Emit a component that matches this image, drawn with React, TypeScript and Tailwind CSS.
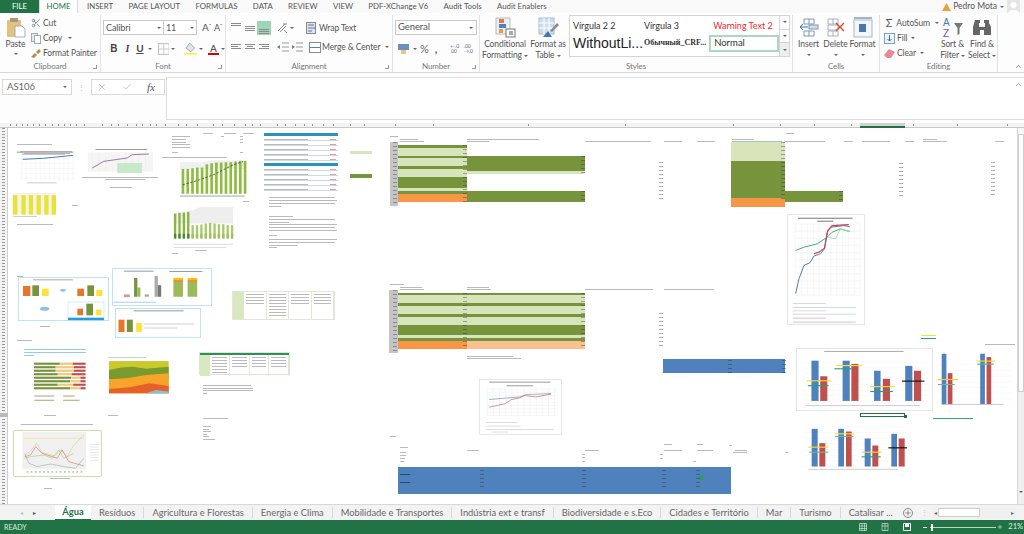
import { ChevronDown, Plus, Scissors, X, Check } from "lucide-react"

const tabs = ["INSERT", "PAGE LAYOUT", "FORMULAS", "DATA", "REVIEW", "VIEW", "PDF-XChange V6", "Audit Tools", "Audit Enablers"]
const sheets = ["Resíduos", "Agricultura e Florestas", "Energia e Clima", "Mobilidade e Transportes", "Indústria ext e transf", "Biodiversidade e s.Eco", "Cidades e Território", "Mar", "Turismo", "Catalisar ..."]

// tiny illegible cell text in the zoomed out sheet: [x, y, width]
const marks: number[][] = [
  [17, 144, 35], [20, 151, 52], [24, 153, 46], [82, 177, 76], [105, 179, 40], [110, 187, 22], [72, 205, 6], [17, 224, 36],
  [203, 133, 10], [224, 133, 12], [243, 133, 11], [172, 136, 18], [172, 139, 14], [172, 142, 14], [172, 144, 18], [172, 147, 18], [172, 152, 6], [221, 136, 3], [240, 136, 3], [240, 139, 3], [240, 142, 3], [240, 152, 3],
  [162, 157, 65], [172, 253, 6], [243, 201, 6], [195, 250, 12],
  [269, 197, 66], [269, 200, 68], [269, 203, 66], [269, 206, 12], [269, 216, 24], [269, 219, 66], [269, 222, 20], [269, 224, 68], [269, 227, 66], [269, 230, 68], [269, 235, 8], [269, 239, 68], [269, 242, 66], [269, 245, 28], [269, 247, 8],
  [17, 340, 15], [40, 326, 10], [17, 276, 6],
  [44, 415, 12], [108, 415, 10], [203, 385, 48], [203, 388, 50], [203, 390, 50], [203, 393, 4], [203, 418, 25], [203, 426, 8], [203, 429, 6], [203, 431, 8], [203, 434, 4], [203, 436, 6], [203, 439, 12],
  [21, 424, 72], [44, 488, 8], [50, 478, 20],
  [390, 136, 8], [400, 139, 18], [400, 141, 24], [467, 139, 72], [467, 141, 22], [585, 141, 66], [664, 141, 18], [697, 141, 18], [732, 139, 22], [732, 141, 50], [785, 141, 40], [844, 141, 9], [862, 141, 28], [905, 141, 9], [923, 139, 14], [923, 141, 24], [995, 141, 9], [786, 133, 8],
  [390, 284, 14], [400, 287, 22], [400, 289, 24], [467, 287, 22], [467, 289, 24], [585, 289, 68], [664, 289, 50],
  [467, 356, 46], [467, 358, 54], [390, 436, 6], [400, 447, 8], [400, 452, 6], [400, 455, 6], [400, 458, 5], [400, 461, 4], [467, 450, 12], [585, 450, 14], [664, 450, 18], [697, 450, 16], [664, 444, 8], [697, 444, 6], [582, 454, 3], [582, 457, 3], [582, 461, 3], [660, 454, 3], [660, 458, 3], [693, 461, 3],
  [735, 450, 12], [733, 452, 14], [729, 445, 3], [785, 452, 3], [985, 344, 30],
]

// columns of little numbers beside the coloured cells: [x, y, height]
const numberStrips: number[][] = [
  [393, 142, 64], [463, 145, 57], [581, 156, 18], [581, 191, 11], [781, 142, 60], [839, 191, 11], [659, 162, 38], [899, 163, 36], [991, 162, 34],
  [393, 290, 62], [463, 293, 56], [581, 293, 56], [659, 313, 33], [728, 360, 13], [782, 360, 13], [480, 470, 20], [582, 470, 20], [662, 470, 20], [696, 470, 20],
]

const ticks = [10, 16, 22, 27, 33, 39, 45, 52, 58, 64, 70, 76, 84, 102, 111, 118, 127, 136, 142, 150, 156, 165, 178, 186, 197, 213, 222, 234, 245, 252, 260, 277, 285, 295, 304, 312, 323, 333, 350, 364, 395, 433, 528, 625, 733, 780, 814, 851, 873, 913, 957, 1007]

function Group({ w, label, launcher, children }: { w: string; label: string; launcher?: boolean; children: React.ReactNode }) {
  return (
    <div className={`${w} relative flex shrink-0 flex-col whitespace-nowrap border-r border-[#e2e2e2]`}>
      <div className="min-h-0 flex-1">{children}</div>
      <div className="h-[11px] text-center text-[8px] leading-[10px] text-[#777]">{label}</div>
      {launcher && <div className="absolute bottom-[3px] right-[3px] size-[4px] border-b border-r border-[#999]" />}
    </div>
  )
}

function Caret({ className = "" }: { className?: string }) {
  return <span className={`inline-block border-x-[2px] border-t-[2px] border-x-transparent border-t-[#666] align-middle ${className}`} />
}

function AlignIcon({ lines, active }: { lines: number[][]; active?: boolean }) {
  return (
    <svg width="14" height="14" viewBox="0 0 14 14" className={active ? "bg-[#9fd5b7]" : ""}>
      {lines.map((l, i) => (
        <rect key={i} x={l[0]} y={l[1]} width={l[2]} height="1" fill="#8a8a8a" />
      ))}
    </svg>
  )
}

function Ribbon() {
  return (
    <div className="flex h-[60px] border-b border-[#d8d8d8] bg-[#fdfdfd] pt-[2px] text-[8.5px] tracking-[-0.1px] text-[#555]">
      <Group w="w-[101px]" label="Clipboard" launcher>
        <div className="flex pt-[2px]">
          <div className="flex w-[31px] flex-col items-center">
            <svg width="20" height="21" viewBox="0 0 20 21">
              <rect x="1" y="3" width="14" height="17" rx="1" fill="#e3c27f" />
              <rect x="4" y="1" width="8" height="4" fill="#a99a7a" />
              <path d="M9 9h7l3 3v8H9z" fill="#fff" stroke="#8fa0b5" strokeWidth="0.8" />
            </svg>
            <span className="leading-[12px]">Paste</span>
            <Caret className="mt-[3px]" />
          </div>
          <div className="flex flex-col gap-[3px] leading-[12px]">
            <div className="flex items-center gap-[2px]"><Scissors size={10} className="text-[#6b84a8]" /><span>Cut</span></div>
            <div className="flex items-center gap-[2px]">
              <svg width="10" height="11" viewBox="0 0 10 11"><rect x="0.5" y="0.5" width="6" height="8" fill="#e8e8e8" stroke="#aaa" /><rect x="3.5" y="2.5" width="6" height="8" fill="#fff" stroke="#9ab" /></svg>
              <span>Copy</span><Caret className="ml-[4px]" />
            </div>
            <div className="flex items-center gap-[2px]">
              <svg width="10" height="10" viewBox="0 0 10 10"><path d="M0 9l4-4 2 2-3 3zM5 4l3-3 2 2-3 3z" fill="#b58a4a" /></svg>
              <span>Format Painter</span>
            </div>
          </div>
        </div>
      </Group>

      <Group w="w-[125px]" label="Font" launcher>
        <div className="flex items-center pl-[2px] pt-[5px]">
          <div className="flex h-[15px] w-[61px] items-center justify-between border border-[#c9c9c9] bg-white px-[2px] text-[9px]">Calibri<Caret /></div>
          <div className="flex h-[15px] w-[33px] items-center justify-between border border-l-0 border-[#c9c9c9] bg-white px-[2px] text-[9px]">11<Caret /></div>
          <span className="ml-[5px] text-[10px]">A<sup className="text-[6px]">ˆ</sup></span><span className="ml-[3px] text-[9px]">A<sup className="text-[6px]">ˇ</sup></span>
        </div>
        <div className="flex items-center pl-[6px] pt-[6px] text-[10px] text-[#444]">
          <b className="w-[14px] text-center font-['Liberation_Sans']">B</b>
          <i className="w-[14px] text-center font-['Liberation_Serif'] font-bold">I</i>
          <u className="w-[12px] text-center font-bold">U</u>
          <Caret className="ml-[2px]" />
          <svg width="12" height="12" viewBox="0 0 12 12" className="ml-[6px]"><rect x="0.5" y="0.5" width="11" height="11" fill="none" stroke="#bbb" /><path d="M6 0v12M0 6h12" stroke="#ccc" /></svg>
          <Caret className="ml-[2px]" />
          <svg width="13" height="13" viewBox="0 0 13 13" className="ml-[9px]"><path d="M6 1l5 5-4 4-5-4z" fill="#dfe6ee" stroke="#888" strokeWidth="0.7" /><rect x="0" y="11" width="13" height="2" fill="#f6f05a" /></svg>
          <Caret className="ml-[2px]" />
          <span className="ml-[5px] flex flex-col items-center text-[10px] font-semibold leading-[10px] text-[#555]">A<span className="h-[2px] w-[11px] bg-[#e00000]" /></span>
          <Caret className="ml-[2px]" />
        </div>
      </Group>

      <Group w="w-[167px]" label="Alignment" launcher>
        <div className="flex items-center pl-[3px] pt-[6px]">
          <AlignIcon lines={[[2, 2, 10], [2, 4, 10]]} />
          <AlignIcon lines={[[2, 5, 10], [2, 7, 10], [2, 9, 10]]} />
          <AlignIcon active lines={[[2, 8, 10], [2, 10, 10], [2, 12, 10]]} />
          <svg width="13" height="12" viewBox="0 0 13 12" className="ml-[5px]"><path d="M2 9l7-7M4 10l6-6M7 2h4M8 8l3 3" stroke="#888" fill="none" /></svg>
          <Caret className="ml-[1px]" />
          <svg width="12" height="12" viewBox="0 0 12 12" className="ml-[12px]"><rect x="0.5" y="0.5" width="9" height="11" fill="#dde6f0" stroke="#889" /><path d="M2 3h6M2 6h8M2 9h4" stroke="#678" /></svg>
          <span className="ml-[1px]">Wrap Text</span>
        </div>
        <div className="flex items-center pl-[3px] pt-[5px]">
          <AlignIcon lines={[[2, 4, 10], [2, 6, 7], [2, 8, 10]]} />
          <AlignIcon lines={[[2, 4, 10], [4, 6, 6], [2, 8, 10]]} />
          <AlignIcon lines={[[2, 4, 10], [5, 6, 7], [2, 8, 10]]} />
          <svg width="14" height="12" viewBox="0 0 14 12" className="ml-[5px]"><path d="M6 2h7M6 6h7M6 10h7" stroke="#999" /><path d="M1 6l3-2v4z" fill="#5b7fb0" /></svg>
          <svg width="14" height="12" viewBox="0 0 14 12"><path d="M6 2h7M6 6h7M6 10h7" stroke="#999" /><path d="M5 6l-3-2v4z" fill="#5b7fb0" /></svg>
          <svg width="12" height="11" viewBox="0 0 12 11" className="ml-[5px]"><rect x="0.5" y="0.5" width="11" height="10" fill="#fff" stroke="#889" /><path d="M1 5.5h10" stroke="#5b7fb0" /></svg>
          <span className="ml-[1px]">Merge &amp; Center</span><Caret className="ml-[5px]" />
        </div>
      </Group>

      <Group w="w-[87px]" label="Number" launcher>
        <div className="px-[2px] pt-[5px]">
          <div className="flex h-[15px] w-[82px] items-center justify-between border border-[#c9c9c9] bg-white px-[2px] text-[9.5px]">General<Caret className="mr-[1px]" /></div>
        </div>
        <div className="flex items-center pl-[5px] pt-[6px] text-[11px] text-[#666]">
          <svg width="11" height="12" viewBox="0 0 11 12"><rect x="0" y="1" width="11" height="6" fill="#6d8fbb" /><rect x="3" y="7" width="5" height="4" fill="#e4c87e" /></svg>
          <Caret className="ml-[4px]" /><span className="ml-[3px]">%</span><span className="ml-[6px] font-bold">,</span>
          <span className="ml-[13px] text-[5px] leading-[5px] text-[#567]">←.0<br />.00</span>
          <span className="ml-[5px] text-[5px] leading-[5px] text-[#567]">.00<br />→.0</span>
        </div>
      </Group>

      <Group w="w-[313px]" label="Styles">
        <div className="flex pl-[2px]">
          <div className="flex w-[46px] flex-col items-center text-center leading-[11px]">
            <svg width="21" height="21" viewBox="0 0 21 21" className="mb-[1px] mt-[2px]"><rect x="1" y="1" width="14" height="16" fill="#eaf0f7" stroke="#bbb" /><rect x="4" y="2" width="5" height="4" fill="#e07a4a" /><rect x="4" y="7" width="7" height="4" fill="#4f7fc0" /><rect x="4" y="12" width="4" height="4" fill="#e5a03a" /><rect x="11" y="12" width="9" height="8" fill="#fff" stroke="#777" /><path d="M14 15h4M14 17h4" stroke="#555" /></svg>
            <span>Conditional</span><span>Formatting <Caret /></span>
          </div>
          <div className="flex w-[40px] flex-col items-center text-center leading-[11px]">
            <svg width="21" height="21" viewBox="0 0 21 21" className="mb-[1px] mt-[2px]"><rect x="1" y="1" width="15" height="16" fill="#cfdcec" stroke="#a9bdd3" /><path d="M1 6h15M1 11h15M6 1v16M11 1v16" stroke="#fff" /><path d="M5 20l5-6 4 6z" fill="#3f78b5" /><path d="M12 14l7-8 2 2-7 7z" fill="#888" /></svg>
            <span>Format as</span><span>Table <Caret /></span>
          </div>
          <div className="ml-[1px] flex h-[42px] w-[221px] border border-[#d4d4d4] bg-white text-[9px] tracking-normal text-[#333]">
            <div className="w-[70px] pl-[3px]">
              <div className="pt-[4px] leading-[12px]">Vírgula 2 2</div>
              <div className="whitespace-nowrap pt-[2px] font-['Liberation_Sans'] text-[14px] leading-[18px] text-[#222]">WithoutLi...</div>
            </div>
            <div className="w-[70px] pl-[4px]">
              <div className="pt-[4px] leading-[12px]">Vírgula 3</div>
              <div className="whitespace-nowrap pt-[5px] font-['Liberation_Serif'] text-[8px] font-bold leading-[12px]">Обычный_CRF...</div>
            </div>
            <div className="w-[70px]">
              <div className="pl-[4px] pt-[4px] leading-[12px] text-[#f02a2a]">Warning Text 2</div>
              <div className="mt-[3px] flex h-[17px] w-[70px] items-center border-2 border-[#a8d8bf] pl-[3px] text-[9.5px]">Normal</div>
            </div>
            <div className="flex w-[10px] flex-col border-l border-[#d4d4d4]">
              <div className="flex flex-1 items-center justify-center"><Caret /></div>
              <div className="flex flex-1 items-center justify-center border-y border-[#d4d4d4]"><Caret /></div>
              <div className="flex flex-1 items-center justify-center bg-[#eee]"><Caret /></div>
            </div>
          </div>
        </div>
      </Group>

      <Group w="w-[87px]" label="Cells">
        <div className="flex pl-[2px] leading-[11px]">
          <div className="flex w-[27px] flex-col items-center">
            <svg width="20" height="21" viewBox="0 0 20 21" className="mb-[1px] mt-[2px]"><path d="M5 2h10v5H5zM5 14h10v5H5zM10 2v5M10 14v5" fill="#fff" stroke="#7d96b3" /><rect x="10" y="8" width="9" height="4" fill="#d5dfeb" stroke="#7d96b3" /><path d="M9 10H1m3-3l-3 3 3 3" stroke="#3572b0" fill="none" /></svg>
            <span>Insert</span><Caret className="mt-[4px]" />
          </div>
          <div className="flex w-[27px] flex-col items-center">
            <svg width="20" height="21" viewBox="0 0 20 21" className="mb-[1px] mt-[2px]"><path d="M2 2h10v5H2zM2 14h10v5H2zM7 2v5M7 14v5M2 8h10v5H2z" fill="#fff" stroke="#a3b1c2" /><path d="M10 6l8 8m0-8l-8 8" stroke="#d9452c" strokeWidth="1.4" /></svg>
            <span>Delete</span><Caret className="mt-[4px]" />
          </div>
          <div className="flex w-[27px] flex-col items-center">
            <svg width="20" height="21" viewBox="0 0 20 21" className="mb-[1px] mt-[2px]"><rect x="1" y="3" width="18" height="17" fill="#f4f7fa" stroke="#a9b6c4" /><rect x="6" y="7" width="7" height="8" fill="#4878b0" /><path d="M1 1h18" stroke="#3572b0" /></svg>
            <span>Format</span><Caret className="mt-[4px]" />
          </div>
        </div>
      </Group>

      <Group w="w-[118px]" label="Editing">
        <div className="flex pl-[4px] leading-[12px]">
          <div className="flex w-[55px] flex-col gap-[3px] pt-[2px]">
            <div className="flex items-center gap-[2px]"><span className="w-[11px] text-center text-[11px] leading-[12px]">Σ</span>AutoSum<Caret className="ml-[3px]" /></div>
            <div className="flex items-center gap-[2px]"><svg width="11" height="11" viewBox="0 0 11 11"><rect x="0.5" y="0.5" width="10" height="10" fill="#eef4fb" stroke="#7ea0c8" /><path d="M5.5 2v6m-2-2l2 2 2-2" stroke="#2f6fb5" fill="none" /></svg>Fill<Caret className="ml-[2px]" /></div>
            <div className="flex items-center gap-[2px]"><svg width="11" height="9" viewBox="0 0 11 9"><path d="M0 6l5-6 6 3-4 6H3z" fill="#e58a96" /></svg>Clear<Caret className="ml-[2px]" /></div>
          </div>
          <div className="flex w-[27px] flex-col items-center leading-[11px]">
            <svg width="20" height="21" viewBox="0 0 20 21" className="mb-[1px] mt-[2px]"><path d="M11 6h9l-3.5 5v6l-2 1v-7z" fill="#777" /><text x="0" y="9" fontSize="10" fill="#3d78c0" fontFamily="Liberation Sans">A</text><text x="0" y="20" fontSize="10" fill="#7a52a8" fontFamily="Liberation Sans">Z</text></svg>
            <span>Sort &amp;</span><span>Filter <Caret /></span>
          </div>
          <div className="ml-[1px] flex w-[30px] flex-col items-center leading-[11px]">
            <svg width="20" height="21" viewBox="0 0 20 21" className="mb-[1px] mt-[2px]"><path d="M3 3h5v3h-1v4h1v8H1v-8zM12 3h5v3l2 4v8h-7v-8h1V6h-1zM8 10h4v3H8z" fill="#666" /></svg>
            <span>Find &amp;</span><span>Select <Caret /></span>
          </div>
        </div>
      </Group>
      <div className="relative flex-1"><ChevronDown size={9} className="absolute bottom-[1px] right-[1px] rotate-180 text-[#666]" /></div>
    </div>
  )
}

function FormulaBar() {
  return (
    <div className="flex h-[50px] bg-[#fdfdfd] pb-[3px] pt-[4px] text-[9.5px] text-[#666]">
      <div className="ml-[2px] mt-[2px] flex h-[16px] w-[70px] items-center justify-between border border-[#d8d8d8] bg-white px-[4px]">AS106<Caret /></div>
      <div className="mt-[2px] flex h-[16px] w-[19px] items-center justify-center text-[7px] text-[#bbb]">⋮</div>
      <div className="mt-[2px] flex h-[16px] w-[74px] items-center border border-[#d8d8d8] bg-white">
        <X size={10} className="ml-[5px] text-[#bbb]" />
        <Check size={10} className="ml-[15px] text-[#bbb]" />
        <span className="ml-[15px] font-['Liberation_Serif'] text-[11px] italic text-[#555]">fx</span>
      </div>
      <div className="relative ml-px flex-1 border border-r-0 border-[#dcdcdc] bg-white">
        <ChevronDown size={9} className="absolute right-[1px] top-[2px] rotate-180 text-[#777]" />
      </div>
    </div>
  )
}

function Ruler() {
  return (
    <div className="relative h-[5px] shrink-0 border-b border-[#c9c9c9] bg-[#f3f3f3]">
      {ticks.map((x) => (
        <div key={x} className="absolute top-px h-[2px] w-px bg-[#8e8e8e]" style={{ left: x }} />
      ))}
      <div className="absolute left-[860px] top-0 h-[5px] w-[45px] border-b-2 border-[#217346] bg-[#d2d2d2]" />
    </div>
  )
}

function Cols({ rows }: { rows: [number, string][] }) {
  return (
    <div className="flex flex-col">
      {rows.map(([h, c], i) => (
        <div key={i} className={c} style={{ height: h }} />
      ))}
    </div>
  )
}

const dark = "bg-[#77933c]"
const light = "bg-[#d8e4bc]"
const orange = "bg-[#f79646]"

function Bars({ view, w, h, bars, lines, base, title }: { view: string; w: number; h: number; bars: number[][]; lines: (number | string)[][]; base: number; title?: boolean }) {
  const [vx, vy, vw, vh] = view.split(" ").map(Number)
  return (
    <svg width={w} height={h} viewBox={view}>
      {[...Array(8)].map((_, i) => (
        <line key={i} x1={vx + 15} x2={vx + vw - 10} y1={base - i * 17} y2={base - i * 17} stroke="#ececec" />
      ))}
      {title && <rect x={vx + 80} y={vy + 6} width={245} height="3" fill="#aaa" />}
      {bars.map((b, i) => (
        <rect key={i} x={b[0]} y={b[2]} width={b[1] - b[0]} height={base - b[2]} fill={i % 2 ? "#c0504d" : "#4f81bd"} />
      ))}
      {lines.map((l, i) => (
        <line key={i} x1={l[0]} x2={l[1]} y1={l[2]} y2={l[2]} stroke={l[3] as string} strokeWidth="3.5" />
      ))}
      <rect x={vx + 25} y={vy + vh - 15} width={vw - 60} height="3" fill="#ccc" />
    </svg>
  )
}

function MiniChart({ view, w, h, children, className }: { view: string; w: number; h: number; children: React.ReactNode; className: string }) {
  return (
    <svg width={w} height={h} viewBox={view} className={`absolute ${className}`}>
      {children}
    </svg>
  )
}

function Sheet() {
  return (
    <div className="relative flex-1 overflow-hidden bg-white">
      {/* row headers */}
      <div className="absolute inset-y-0 left-0 w-[8px] border-r border-[#d0d0d0] bg-[#f3f3f3] px-[2px]">
        <div className="h-full bg-[repeating-linear-gradient(to_bottom,#999_0,#999_1px,#f3f3f3_1px,#f3f3f3_3px)]" />
      </div>
      <div className="absolute left-0 top-[285px] h-[4px] w-[8px] bg-[#b9b9b9]" />
      {/* everything below keeps page coordinates minus the sheet top (128) */}
      <div className="absolute left-0 top-[-128px] h-[534px] w-[1024px]">
        {marks.map(([x, y, w], i) => (
          <div key={i} className="absolute h-px bg-[#666] opacity-45" style={{ left: x, top: y, width: w }} />
        ))}

        {/* first table */}
        <div className="absolute left-[390px] top-[142px] h-[64px] w-[8px] bg-[#c4c4c4]" />
        <div className="absolute left-[398px] top-[145px] w-[69px]">
          <Cols rows={[[3, dark], [8, light], [2, dark], [8, light], [3, dark], [8, light], [11, dark], [3, light], [3, dark], [8, orange]]} />
        </div>
        <div className="absolute left-[467px] top-[156px] w-[118px]">
          <Cols rows={[[15, dark], [3, light], [17, "bg-white"], [11, dark]]} />
        </div>
        <div className="absolute left-[731px] top-[142px] w-[54px]">
          <Cols rows={[[19, light], [37, dark], [9, orange]]} />
        </div>
        <div className="absolute left-[785px] top-[191px] h-[11px] w-[58px] bg-[#77933c]" />

        {/* second table */}
        <div className="absolute left-[389px] top-[290px] h-[63px] w-[9px] bg-[#c4c4c4]" />
        <div className="absolute left-[398px] top-[293px] w-[69px]">
          <Cols rows={[[2, dark], [8, light], [3, dark], [8, light], [3, dark], [8, light], [10, dark], [3, light], [3, dark], [8, orange]]} />
        </div>
        <div className="absolute left-[467px] top-[293px] w-[118px]">
          <Cols rows={[[2, dark], [8, light], [3, dark], [8, light], [3, dark], [8, light], [10, dark], [3, light], [3, dark], [8, "bg-[#fac090]"]]} />
        </div>

        <div className="absolute left-[663px] top-[359px] h-[14px] w-[122px] bg-[#4f81bd]" />
        <div className="absolute left-[398px] top-[467px] h-[27px] w-[333px] bg-[#4f81bd]" />
        <div className="absolute left-[699px] top-[476px] size-[4px] rotate-45 bg-[#2e9e4f]" />
        <div className="absolute left-[400px] top-[474px] h-px w-[10px] bg-[#2a4a70]" />
        <div className="absolute left-[400px] top-[482px] h-px w-[10px] bg-[#2a4a70]" />

        {numberStrips.map(([x, y, h], i) => (
          <div key={i} className="absolute w-[4px] bg-[repeating-linear-gradient(to_bottom,#333_0,#333_1px,transparent_1px,transparent_4px)] opacity-40" style={{ left: x, top: y, height: h }} />
        ))}

        {/* legend chips */}
        <div className="absolute left-[350px] top-[151px] h-[3px] w-[22px] bg-[#d8e4bc]" />
        <div className="absolute left-[350px] top-[174px] h-[4px] w-[22px] bg-[#77933c]" />

        {/* water chart left */}
        <MiniChart view="45 75 180 105" w={60} h={35} className="left-[15px] top-[150px]">
          <rect x="50" y="80" width="170" height="3" fill="#999" />
          <rect x="65" y="86" width="130" height="3" fill="#aaa" />
          {[...Array(12)].map((_, i) => <line key={i} x1={65 + i * 14} x2={65 + i * 14} y1="95" y2="165" stroke="#e6e6e6" />)}
          {[0, 1, 2, 3, 4].map((i) => <line key={i} x1="60" x2="222" y1={100 + i * 15} y2={100 + i * 15} stroke="#e6e6e6" />)}
          <path d="M68 103L130 100L220 91" stroke="#4d7fb5" fill="none" strokeWidth="3" />
          <rect x="80" y="172" width="90" height="3" fill="#ccc" />
        </MiniChart>
        <MiniChart view="260 70 200 90" w={67} h={30} className="left-[87px] top-[148px]">
          <rect x="285" y="73" width="155" height="3" fill="#999" />
          <rect x="262" y="83" width="195" height="58" fill="#f5f5f5" />
          {[...Array(9)].map((_, i) => <line key={i} x1={275 + i * 20} x2={275 + i * 20} y1="83" y2="141" stroke="#e6e6e6" />)}
          <path d="M275 130L310 110L380 100L395 90L445 88" stroke="#a07aa0" fill="none" strokeWidth="3" />
          <rect x="350" y="115" width="75" height="30" fill="#c9e8c9" />
        </MiniChart>
        <MiniChart view="30 185 140 85" w={47} h={30} className="left-[10px] top-[188px]">
          <rect x="35" y="197" width="132" height="65" fill="#f4f4ec" />
          {[45, 70, 92, 115, 138, 160].map((x) => <rect key={x} x={x - 6} y="204" width="13" height="58" fill="#e8e337" />)}
          <rect x="40" y="266" width="70" height="3" fill="#ccc" />
        </MiniChart>

        {/* tall green bar charts */}
        <MiniChart view="525 100 220 125" w={73} h={42} className="left-[175px] top-[158px]">
          <path d="M540 112L600 112L640 106H740V132H540z" fill="#f0f0f0" />
          {[132, 132, 130, 128, 128, 118, 115, 113, 113, 112, 112, 110, 108, 108].map((t, i) => (
            <rect key={i} x={545 + i * 14.4} y={t} width="8" height={207 - t} fill="#8fbb3f" />
          ))}
          <path d="M548 180L590 168L640 150L700 120L730 110" stroke="#444" strokeWidth="2.5" fill="none" strokeDasharray="7 5" />
          <rect x="540" y="212" width="195" height="4" fill="#bbb" />
        </MiniChart>
        <MiniChart view="495 240 220 140" w={73} h={47} className="left-[165px] top-[205px]">
          <path d="M520 265L580 255L600 245H700V295H520z" fill="#eee" />
          {[265, 263, 262, 260, 300, 300, 298, 295, 293, 295, 297, 297, 300, 300].map((t, i) => (
            <g key={i}>
              <rect x={522 + i * 13.2} y={t} width="7" height={340 - t} fill={i < 4 ? "#8cb53f" : "#a9c96a"} />
              <rect x={522 + i * 13.2} y="326" width="7" height="14" fill={i < 4 ? "#3f8a33" : "#a0c060"} />
            </g>
          ))}
          <rect x="520" y="356" width="180" height="3" fill="#ddd" />
          <rect x="520" y="366" width="160" height="3" fill="#ddd" />
        </MiniChart>

        {/* report tables */}
        {[133, 163].map((t) => (
          <div key={t} className="absolute left-[264px] w-[74px]" style={{ top: t }}>
            <div className="h-[3px] bg-[#2a93b8]" />
            {[0, 1, 2, 3, 4].map((r) => (
              <div key={r} className="mt-[2px] flex h-[3px] justify-between border-b border-[#cfd9e2] pr-[2px]">
                <div className="mt-[1px] h-px w-[44px] bg-[#bbb]" />
                <div className="mt-[1px] h-px w-[6px] bg-[#d8a0a0]" />
              </div>
            ))}
          </div>
        ))}

        {/* light blue framed boxes */}
        <div className="absolute left-[18px] top-[277px] h-[44px] w-[91px] border border-[#bfe3f3] bg-white" />
        <MiniChart view="55 458 270 129" w={90} h={43} className="left-[18px] top-[278px]">
          <rect x="100" y="462" width="120" height="3" fill="#aaa" />
          <rect x="70" y="482" width="22" height="30" fill="#e8752a" /><rect x="98" y="480" width="20" height="32" fill="#77933c" /><rect x="127" y="490" width="20" height="22" fill="#ffe13a" />
          <ellipse cx="190" cy="495" rx="9" ry="4" fill="#8fbfe5" /><ellipse cx="135" cy="550" rx="14" ry="6" fill="#8fbfe5" />
          <rect x="233" y="490" width="20" height="22" fill="#e8752a" /><rect x="263" y="480" width="20" height="32" fill="#77933c" /><rect x="290" y="494" width="18" height="18" fill="#ffe13a" />
          <rect x="205" y="530" width="108" height="57" fill="#fff" stroke="#bfe3f3" strokeWidth="2" />
          <rect x="233" y="550" width="17" height="20" fill="#e8752a" /><rect x="260" y="535" width="20" height="35" fill="#77933c" /><rect x="288" y="553" width="17" height="17" fill="#ffe13a" />
          <rect x="205" y="577" width="108" height="8" fill="#1e9fe0" />
        </MiniChart>
        <div className="absolute left-[112px] top-[268px] h-[38px] w-[100px] border border-[#bfe3f3] bg-white" />
        <MiniChart view="337 428 298 112" w={99} h={37} className="left-[112px] top-[268px]">
          <rect x="372" y="436" width="90" height="3" fill="#999" /><rect x="510" y="437" width="100" height="3" fill="#999" />
          <rect x="372" y="508" width="18" height="8" fill="#d9958a" /><rect x="403" y="458" width="10" height="57" fill="#77933c" /><rect x="413" y="487" width="9" height="28" fill="#9bbb59" />
          <rect x="435" y="508" width="13" height="7" fill="#aaa" /><rect x="465" y="452" width="10" height="63" fill="#aaa" /><rect x="475" y="480" width="10" height="35" fill="#777" />
          {[522, 565].map((x) => (
            <g key={x}><rect x={x} y="458" width="29" height="7" fill="#ffc000" /><rect x={x} y="465" width="29" height="5" fill="#e8752a" /><rect x={x} y="470" width="29" height="45" fill="#9bbb59" /></g>
          ))}
          <rect x="340" y="530" width="130" height="3" fill="#a8d0e0" />
        </MiniChart>
        <div className="absolute left-[115px] top-[308px] h-[30px] w-[86px] border border-[#bfe3f3] bg-white" />
        <MiniChart view="345 -5 257 90" w={86} h={30} className="left-[115px] top-[308px]">
          <rect x="400" y="2" width="150" height="3" fill="#999" />
          <rect x="355" y="30" width="18" height="37" fill="#e8752a" /><rect x="380" y="30" width="18" height="37" fill="#77933c" /><rect x="408" y="40" width="17" height="27" fill="#ffe13a" />
          <rect x="432" y="42" width="150" height="2" fill="#bbb" /><rect x="432" y="54" width="100" height="2" fill="#bbb" />
        </MiniChart>

        {/* strategy tables */}
        <div className="absolute left-[232px] top-[291px] flex h-[29px] w-[103px] border border-[#e5e5d5] bg-white">
          <div className="w-[11px] bg-[#d8e8c0]" />
          {[20, 30, 20, 20].map((w, i) => (
            <div key={i} className="flex flex-1 flex-col gap-[2px] border-r border-[#e5e5d5] p-[2px]">
              {[...Array(i === 1 ? 8 : 4)].map((_, k) => <div key={k} className="h-px bg-[#bbb]" />)}
            </div>
          ))}
        </div>
        <div className="absolute left-[199px] top-[352px] h-[23px] w-[91px] border border-[#d8e8d0] bg-white">
          <div className="h-[2px] bg-[#2f8f5a]" />
          <div className="flex h-[21px]">
            <div className="w-[10px] bg-[#d8e8c0]" />
            {[0, 1, 2, 3].map((i) => (
              <div key={i} className="flex flex-1 flex-col gap-[2px] border-r border-[#e5e5d5] p-[2px]">
                {[...Array(i === 0 ? 6 : 4)].map((_, k) => <div key={k} className="h-px bg-[#bbb]" />)}
              </div>
            ))}
          </div>
        </div>

        {/* stacked bars and area */}
        <div className="absolute left-[24px] top-[349px] flex w-[62px] flex-col gap-[2px]">
          <div className="h-px bg-[#8fd0e8]" /><div className="h-px bg-[#8fd0e8]" /><div className="h-px w-[10px] bg-[#8fd0e8]" />
        </div>
        <MiniChart view="75 150 190 130" w={63} h={43} className="left-[25px] top-[360px]">
          {[[50, 25, 25], [42, 35, 23], [42, 35, 23], [46, 27, 27], [72, 18, 10], [70, 20, 10], [46, 30, 24], [70, 20, 10]].map(([a, b, c], i) => (
            <g key={i} transform={`translate(102 ${158 + i * 10.6})`}>
              <rect width={a * 1.56} height="6.5" fill="#77933c" />
              <rect x={a * 1.56} width={b * 1.56} height="6.5" fill="#f2c87a" />
              <rect x={(a + b) * 1.56} width={c * 1.56} height="6.5" fill="#c0504d" />
            </g>
          ))}
          <rect x="103" y="257" width="60" height="4" fill="#c5b59a" /><rect x="190" y="257" width="35" height="4" fill="#e0b080" />
          <rect x="103" y="270" width="60" height="4" fill="#c5b59a" /><rect x="190" y="270" width="50" height="4" fill="#b8c090" />
        </MiniChart>
        <div className="absolute left-[108px] top-[357px] h-px w-[38px] bg-[#c6d6c0]" />
        <MiniChart view="325 150 190 105" w={63} h={35} className="left-[108px] top-[360px]">
          <rect x="328" y="153" width="180" height="97" fill="#c9c92b" />
          <path d="M328 180L365 172L400 170L440 176L508 170V208H328z" fill="#7a9a30" />
          <path d="M328 208L380 205L440 195L508 190V250H328z" fill="#f7a52a" />
          <path d="M328 237L390 232L450 220L508 228V250H328z" fill="#e5602a" />
          <path d="M440 250L470 240L508 245V250z" fill="#7ec3e0" />
        </MiniChart>

        {/* quality line chart */}
        <div className="absolute left-[13px] top-[430px] h-[47px] w-[89px] rounded-[2px] border border-[#cfdcae] bg-white" />
        <MiniChart view="40 360 265 138" w={88} h={46} className="left-[14px] top-[430px]">
          <rect x="65" y="365" width="192" height="113" fill="#f0f0f0" />
          <path d="M70 385H250" stroke="#f4e9a8" strokeWidth="3" />
          <path d="M72 430L85 460L110 470L150 462L190 470L225 475L250 445" stroke="#8497b0" fill="none" strokeWidth="1.5" />
          <path d="M72 435L88 425L108 400L125 428L165 438L182 418L200 440L220 405L250 375" stroke="#d8c074" fill="none" strokeWidth="1.5" />
          <path d="M72 440L90 435L105 410L125 430L170 445L185 420L205 455L250 468" stroke="#d0584a" fill="none" strokeWidth="1.5" />
          <path d="M72 445L90 440L130 435L155 445L175 420L190 445L220 430" stroke="#9bbb59" fill="none" strokeWidth="1.5" />
          {[0, 1, 2, 3, 4, 5, 6].map((i) => <rect key={i} x="268" y={402 + i * 8} width="28" height="2" fill="#ddd" />)}
          {[...Array(14)].map((_, i) => <rect key={i} x={78 + i * 12.5} y="484" width="5" height="4" fill="#a8c070" />)}
        </MiniChart>

        {/* evolution chart in the middle */}
        <div className="absolute left-[479px] top-[379px] h-[56px] w-[83px] border border-[#e6e6e6] bg-white" />
        <MiniChart view="298 208 249 166" w={83} h={55} className="left-[479px] top-[379px]">
          <rect x="328" y="216" width="185" height="3" fill="#999" /><rect x="380" y="227" width="80" height="3" fill="#999" />
          {[...Array(12)].map((_, i) => <line key={i} x1={322 + i * 18.5} x2={322 + i * 18.5} y1="238" y2="320" stroke="#e4e4e4" />)}
          {[...Array(9)].map((_, i) => <line key={i} x1="322" x2="530" y1={238 + i * 10} y2={238 + i * 10} stroke="#e4e4e4" />)}
          <path d="M328 270L420 262L440 255L515 252" stroke="#6f90b8" fill="none" strokeWidth="2" />
          <path d="M328 293L375 283L395 270L420 265L435 258L470 262L515 253" stroke="#c0605c" fill="none" strokeWidth="2" />
          <rect x="318" y="338" width="95" height="2" fill="#ccc" /><rect x="318" y="349" width="105" height="2" fill="#ccc" /><rect x="318" y="360" width="205" height="2" fill="#ccc" /><rect x="335" y="367" width="50" height="2" fill="#ccc" />
        </MiniChart>

        {/* supply performance chart */}
        <div className="absolute left-[787px] top-[214px] h-[111px] w-[78px] border border-[#e6e6e6] bg-white" />
        <MiniChart view="202 268 232 332" w={77} h={110} className="left-[788px] top-[215px]">
          <rect x="232" y="276" width="165" height="4" fill="#999" /><rect x="290" y="285" width="48" height="4" fill="#999" />
          {[...Array(12)].map((_, i) => <line key={i} x1={225 + i * 17.7} x2={225 + i * 17.7} y1="295" y2="510" stroke="#e2e2e2" />)}
          {[...Array(11)].map((_, i) => <line key={i} x1="225" x2="420" y1={295 + i * 21.5} y2={295 + i * 21.5} stroke="#e2e2e2" />)}
          <path d="M225 375L250 365L290 355L320 335L335 320L360 310L388 318" stroke="#3fae7a" fill="none" strokeWidth="3" />
          <path d="M320 335L345 340L360 310L390 318" stroke="#9ed8a8" fill="none" strokeWidth="2.5" />
          <path d="M225 505L235 460L250 420L268 412L280 392L300 385L312 370L320 320L330 305L370 300L388 303" stroke="#5b78a8" fill="none" strokeWidth="3" />
          <path d="M280 385L295 380L312 368L322 315L335 300L385 297" stroke="#c8405a" fill="none" strokeWidth="3.5" />
          {[534, 546, 556, 566, 578, 590].map((y, i) => <rect key={y} x="216" y={y} width={i % 2 ? 190 : 100} height="2.5" fill={i > 3 ? "#e0b0b8" : "#c8d4d8"} />)}
        </MiniChart>

        {/* bar chart blocks */}
        <div className="absolute left-[796px] top-[348px] h-[63px] w-[137px] border border-[#e6e6e6] bg-white">
          <Bars view="228 84 409 188" w={135} h={61} base={244} title
            bars={[[269, 291, 120], [296, 318, 168], [365, 387, 120], [392, 414, 130], [462, 482, 151], [489, 511, 176], [558, 580, 136], [585, 607, 151]]}
            lines={[[255, 330, 182, "#f2d93a"], [258, 322, 197, "#2f9e78"], [345, 425, 135, "#f2e43a"], [340, 395, 145, "#2f9e78"], [450, 525, 200, "#f2d93a"], [450, 520, 215, "#2f9e78"], [548, 617, 183, "#111"]]} />
        </div>
        <div className="absolute left-[933px] top-[347px]">
          <Bars view="640 80 245 185" w={82} h={62} base={252}
            bars={[[666, 680, 100], [684, 698, 158], [781, 795, 100], [800, 814, 110]]}
            lines={[[655, 715, 177, "#f2c83a"], [655, 705, 192, "#6fb39a"], [770, 825, 122, "#f2d93a"], [772, 822, 131, "#5fb0a0"]]} />
        </div>
        <div className="absolute left-[800px] top-[422px]">
          <Bars view="240 305 330 155" w={110} h={52} base={438}
            bars={[[275, 293, 325], [298, 316, 368], [355, 372, 325], [378, 395, 333], [434, 452, 354], [457, 475, 375], [514, 531, 340], [536, 554, 354]]}
            lines={[[265, 325, 380, "#f2d93a"], [268, 325, 395, "#6fb39a"], [345, 403, 340, "#f2e43a"], [345, 400, 348, "#6fb39a"], [425, 485, 395, "#f2d93a"], [425, 482, 409, "#2f9e78"], [505, 561, 382, "#111"]]} />
        </div>

        {/* floating line strokes and active cell */}
        <div className="absolute left-[921px] top-[335px] h-px w-[15px] bg-[#f2e43a]" />
        <div className="absolute left-[921px] top-[338px] h-px w-[15px] bg-[#2f9e78]" />
        <div className="absolute left-[933px] top-[418px] h-px w-[40px] bg-[#2fae6a]" />
        <div className="absolute left-[860px] top-[413px] h-[4px] w-[45px] border border-[#217346]" />
        <div className="absolute left-[904px] top-[415px] size-[3px] bg-[#217346]" />
        <div className="absolute left-[1017px] top-[128px] h-[376px] w-[7px] border-l border-[#d6d6d6] bg-[#f0f0f0]">
          <div className="h-[6px] bg-[#f7f7f7]" />
          <div className="h-[258px] border border-[#cfcfcf] bg-white" />
          <div className="absolute bottom-[2px] left-[1px]"><Caret /></div>
        </div>
      </div>
    </div>
  )
}

export default function App() {
  return (
    <div className="flex h-[534px] w-[1024px] flex-col overflow-hidden bg-white font-['Lato',sans-serif]">
      <div className="flex h-[13px] shrink-0 items-center bg-[#f9f9f9] text-[7.8px] text-[#555]">
        <div className="flex h-[13px] w-[39px] items-center justify-center bg-[#217346] text-white">FILE</div>
        <div className="flex h-[14px] w-[39px] items-center justify-center border-x border-[#d8d8d8] bg-white text-[#217346]">HOME</div>
        <div className="ml-[1px] flex gap-[15.4px] whitespace-nowrap pl-[8px]">
          {tabs.map((t) => <span key={t}>{t}</span>)}
        </div>
        <div className="ml-auto flex items-center pr-[4px] text-[8.5px]">
          <svg width="9" height="8" viewBox="0 0 9 8"><path d="M4.5 0L9 8H0z" fill="#e0a63a" /></svg>
          <span className="ml-[2px]">Pedro Mota</span><Caret className="ml-[3px]" />
          <svg width="13" height="13" viewBox="0 0 13 13" className="ml-[3px]"><rect width="13" height="13" fill="#e6e6e6" /><circle cx="6.5" cy="5" r="3" fill="#fff" /><path d="M1 13c1-4 10-4 11 0z" fill="#fff" /></svg>
        </div>
      </div>
      <Ribbon />
      <FormulaBar />
      <Ruler />
      <Sheet />
      <div className="flex h-[16px] shrink-0 items-center border-t border-[#d8d8d8] bg-[#f3f3f3] text-[9.3px] text-[#666]">
        <div className="flex w-[55px] shrink-0 items-center justify-center gap-[10px] text-[6px] text-[#555]"><span className="text-[#bbb]">◂</span><span>▸</span></div>
        <div className="flex h-[16px] w-[36px] shrink-0 items-center justify-center border-b-2 border-[#217346] bg-white font-bold text-[#217346]">Água</div>
        <div className="flex h-[16px] items-center">
          {sheets.map((s) => (
            <span key={s} className="whitespace-nowrap border-r border-[#d8d8d8] px-[8px] leading-[11px] last:border-r-0">{s}</span>
          ))}
        </div>
        <Plus size={10} className="ml-[2px] shrink-0 rounded-full border border-[#888] text-[#666]" />
        <span className="ml-[8px] text-[7px] text-[#bbb]">⋮</span>
        <div className="ml-auto flex h-[11px] w-[84px] shrink-0 items-center justify-between bg-[#f0f0f0] px-[2px] text-[6px]">
          <span>◂</span><div className="ml-[1px] h-[9px] w-[42px] border border-[#cfcfcf] bg-white" /><span className="ml-auto">▸</span>
        </div>
        <div className="w-[8px] shrink-0" />
      </div>
      <div className="flex h-[14px] shrink-0 items-center bg-[#217346] pl-[4px] text-[7px] text-[#dfeee6]">
        <span>READY</span>
        <div className="ml-auto flex items-center pr-[1px]">
          <svg width="8" height="8" viewBox="0 0 8 8"><path d="M0.5 0.5h7v7h-7zM0 3h8M0 5.5h8M3 0v8M5.5 0v8" stroke="#cfe3d8" fill="none" strokeWidth="0.7" /></svg>
          <svg width="8" height="8" viewBox="0 0 8 8" className="ml-[14px]"><path d="M1 0.5h6v7H1zM1 3h6M4 0v8" stroke="#cfe3d8" fill="none" strokeWidth="0.7" /></svg>
          <svg width="8" height="8" viewBox="0 0 8 8" className="ml-[14px]"><path d="M0.5 0.5h7v7h-7z" stroke="#fff" fill="none" /><rect x="2" y="1" width="4" height="3" fill="#fff" /></svg>
          <div className="relative ml-[12px] flex w-[80px] items-center">
            <span className="h-px w-[4px] bg-white" />
            <span className="ml-[3px] h-px w-[66px] bg-[#bcd6c8]" />
            <span className="absolute left-[8px] h-[7px] w-[2px] bg-white" />
            <Plus size={6} className="ml-[1px] text-white" />
          </div>
          <span className="ml-[5px] text-[7.5px]">21%</span>
        </div>
      </div>
    </div>
  )
}
